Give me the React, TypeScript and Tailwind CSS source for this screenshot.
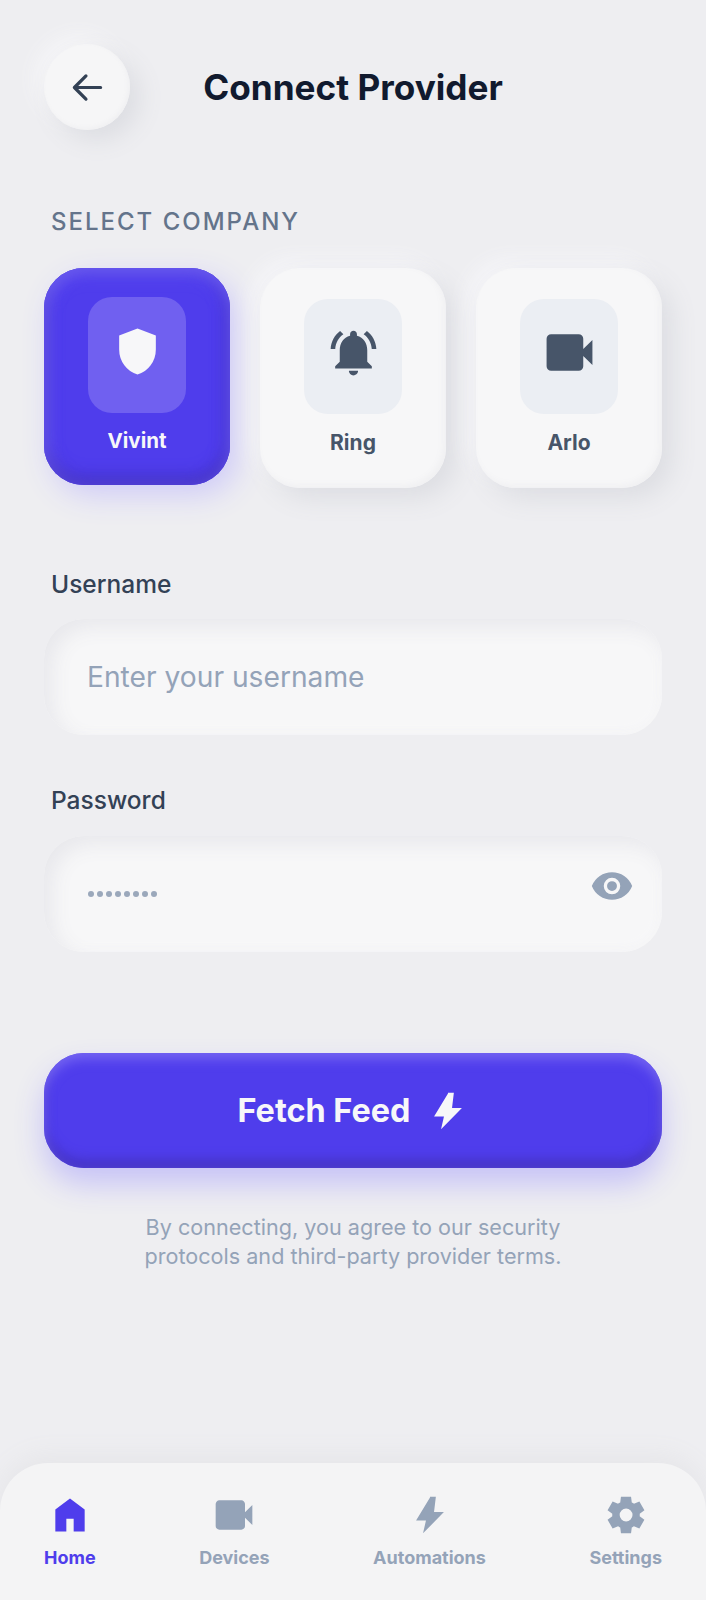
import React from 'react';

const font = { fontFamily: 'Inter, "Liberation Sans", sans-serif' };

function Icon({ d, className }: { d: string; className: string }) {
  return (
    <svg viewBox="0 0 24 24" fill="currentColor" className={className}>
      <path d={d} />
    </svg>
  );
}

const shield = 'M12 22q-3.475-.875-5.738-3.988T4 11.1V5l8-3 8 3v6.1q0 3.8-2.262 6.913T12 22Z';
const bell =
  'M7.58 4.08 6.15 2.65C3.75 4.48 2.17 7.3 2.03 10.5h2c.15-2.65 1.51-4.97 3.55-6.42zm12.39 6.42h2c-.15-3.2-1.73-6.02-4.12-7.85l-1.42 1.43c2.02 1.45 3.39 3.77 3.54 6.42zM18 11c0-3.07-1.64-5.64-4.5-6.32V4c0-.83-.67-1.5-1.5-1.5s-1.5.67-1.5 1.5v.68C7.63 5.36 6 7.92 6 11v5l-2 2v1h16v-1l-2-2v-5zm-6 11c.14 0 .27-.01.4-.04.65-.14 1.18-.58 1.44-1.18.1-.24.15-.5.15-.78h-4c.01 1.1.9 2 2.01 2z';
const video = 'M4 20q-.825 0-1.413-.587T2 18V6q0-.825.587-1.413T4 4h12q.825 0 1.413.587T18 6v4.5l4-4v11l-4-4V18q0 .825-.587 1.413T16 20H4Z';
const bolt = 'M12 2.5 4.4 15h5.4L8.2 22l11.4-11.6h-5.4L15.2 2H12Z';
const home = 'M4 21V9l8-6 8 6v12h-6v-7h-4v7H4Z';
const gear =
  'm9.25 22-.4-3.2q-.325-.125-.612-.3t-.563-.375L4.7 19.375l-2.75-4.75 2.575-1.95Q4.5 12.5 4.5 12.337v-.675q0-.162.025-.337L1.95 9.375l2.75-4.75 2.975 1.25q.275-.2.575-.375t.6-.3l.4-3.2h5.5l.4 3.2q.325.125.613.3t.562.375l2.975-1.25 2.75 4.75-2.575 1.95q.025.175.025.338v.674q0 .163-.05.338l2.575 1.95-2.75 4.75-2.95-1.25q-.275.2-.575.375t-.6.3l-.4 3.2h-5.5Zm2.8-6.5q1.45 0 2.475-1.025T15.55 12q0-1.45-1.025-2.475T12.05 8.5q-1.475 0-2.488 1.025T8.55 12q0 1.45 1.013 2.475T12.05 15.5Z';
const eye =
  'M12 16q1.875 0 3.188-1.313T16.5 11.5q0-1.875-1.313-3.188T12 7q-1.875 0-3.188 1.313T7.5 11.5q0 1.875 1.313 3.188T12 16Zm0-1.8q-1.125 0-1.913-.788T9.3 11.5q0-1.125.787-1.913T12 8.8q1.125 0 1.913.787T14.7 11.5q0 1.125-.787 1.913T12 14.2Zm0 4.8q-3.65 0-6.65-2.037T1 11.5q1.35-3.425 4.35-5.463T12 4q3.65 0 6.65 2.037T23 11.5q-1.35 3.425-4.35 5.463T12 19Z';

const companies = [
  { name: 'Ring', icon: bell },
  { name: 'Arlo', icon: video },
];

const tabs = [
  { name: 'Home', icon: home, active: true },
  { name: 'Devices', icon: video },
  { name: 'Automations', icon: bolt },
  { name: 'Settings', icon: gear },
];

export default function App() {
  return (
    <div style={font} className="flex h-[1600px] flex-col overflow-hidden bg-[#eeeef1]">
      {/* Header */}
      <div className="flex items-center px-[44px] pt-[44px]">
        <button className="flex h-[86px] w-[86px] shrink-0 items-center justify-center rounded-full bg-[#f6f6f7] text-[#334155] shadow-[10px_10px_24px_#dcdde2,-8px_-8px_20px_#f6f6f8,inset_-2px_-2px_4px_#f0f0f2]">
          <svg viewBox="0 0 24 24" fill="none" stroke="currentColor" strokeWidth="2.1" strokeLinecap="round" strokeLinejoin="round" className="h-[37px] w-[37px]">
            <path d="M20.5 12H4M11 4.5 3.5 12l7.5 7.5" />
          </svg>
        </button>
        <h1 className="flex-1 text-center text-[35.2px] leading-[40px] font-bold text-[#111a2e]">Connect Provider</h1>
        <div className="w-[86px] shrink-0" />
      </div>

      {/* Company */}
      <div className="mt-[76px] px-[44px]">
        <p className="pl-[7px] text-[24px] leading-[32px] font-medium tracking-[2px] text-[#64748b]">SELECT COMPANY</p>
        <div className="mt-[30px] grid grid-cols-3 items-start gap-[30px]">
          <div className="flex h-[217px] flex-col items-center rounded-[40px] bg-[#4f3dec] pt-[29px] shadow-[8px_10px_30px_#cfcbf8,inset_0_6px_16px_#6a5af0,inset_0_-8px_16px_#4534c4,inset_6px_0_14px_#5f4ff0,inset_-6px_0_14px_#4737d8]">
            <div className="flex h-[116px] w-[98px] items-center justify-center rounded-[24px] bg-[#7060f0] text-[#f7f7f9]">
              <Icon d={shield} className="mb-[8px] h-[55px] w-[55px]" />
            </div>
            <span className="mt-[14px] text-[20.5px] leading-[28px] font-bold text-[#f7f7f9]">Vivint</span>
          </div>
          {companies.map((c) => (
            <div key={c.name} className="flex h-[220px] flex-col items-center rounded-[40px] bg-[#f7f7f8] pt-[31px] shadow-[10px_10px_26px_#dcdde2,-8px_-8px_20px_#f6f6f9,inset_-3px_-3px_6px_#f0f0f2]">
              <div className="flex h-[115px] w-[98px] items-center justify-center rounded-[24px] bg-[#ebeef3] text-[#475569]">
                <Icon d={c.icon} className="mb-[8px] h-[55px] w-[55px]" />
              </div>
              <span className="mt-[15px] text-[21px] leading-[28px] font-bold text-[#475569]">{c.name}</span>
            </div>
          ))}
        </div>
      </div>

      {/* Form */}
      <div className="mt-[80px] px-[44px]">
        <label className="block pl-[7px] text-[24.5px] leading-[32px] font-medium text-[#334155]">Username</label>
        <div className="mt-[19px] flex h-[116px] items-center rounded-[40px] bg-[#f7f7f8] px-[43px] text-[28.2px] text-[#94a3b8] shadow-[inset_8px_8px_20px_#e8e8ec,inset_-4px_-4px_10px_#f8f8f9]">
          Enter your username
        </div>
        <label className="mt-[49px] block pl-[7px] text-[24.5px] leading-[32px] font-medium text-[#334155]">Password</label>
        <div className="mt-[20px] flex h-[116px] items-center justify-between rounded-[40px] bg-[#f7f7f8] pr-[28px] pl-[44px] text-[#94a3b8] shadow-[inset_8px_8px_20px_#e8e8ec,inset_-4px_-4px_10px_#f8f8f9]">
          <span className="flex gap-[3px]">
            {[0, 1, 2, 3, 4, 5, 6, 7].map((i) => (
              <span key={i} className="h-[6px] w-[6px] rounded-full bg-[#9ba8bb]" />
            ))}
          </span>
          <Icon d={eye} className="mb-[14px] h-[44px] w-[44px]" />
        </div>
      </div>

      {/* Action */}
      <div className="mt-[101px] px-[44px]">
        <button className="flex h-[115px] w-full items-center justify-center gap-[16px] rounded-[40px] bg-[#4f3dec] pt-[1px] pl-[2px] text-[32.4px] font-bold text-[#f7f7f9] shadow-[0_16px_30px_#c6c2f7,inset_0_6px_12px_#7565f2,inset_0_-8px_12px_#4534c4]">
          Fetch Feed
          <Icon d={bolt} className="h-[44px] w-[44px]" />
        </button>
        <p className="mt-[45px] text-center text-[21.6px] leading-[29px] text-[#94a3b8]">
          By connecting, you agree to our security
          <br />
          protocols and third-party provider terms.
        </p>
      </div>

      {/* Bottom nav */}
      <div className="mt-auto flex h-[137px] items-start justify-between rounded-t-[48px] bg-[#f4f4f5] px-[44px] pt-[30px] shadow-[0_-8px_24px_#e6e6e9]">
        {tabs.map((t) => (
          <div key={t.name} className={t.active ? 'flex flex-col items-center text-[#4f3dec]' : 'flex flex-col items-center text-[#94a3b8]'}>
            <Icon d={t.icon} className="h-[44px] w-[44px]" />
            <span className="mt-[8px] text-[18px] leading-[26px] font-bold">{t.name}</span>
          </div>
        ))}
      </div>
    </div>
  );
}
